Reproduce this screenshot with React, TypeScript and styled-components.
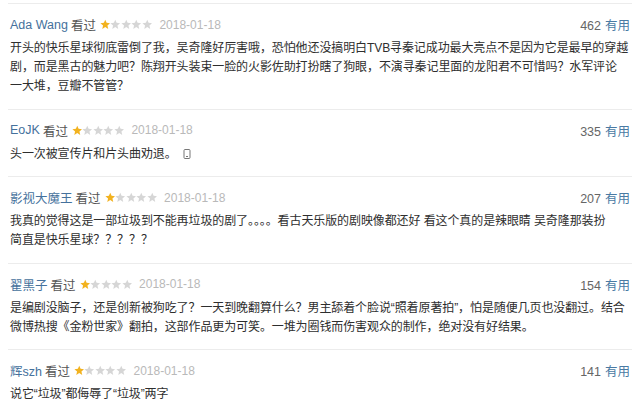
import styled, { createGlobalStyle } from "styled-components";

const GlobalStyle = createGlobalStyle`
  html, body {
    margin: 0;
    padding: 0;
    background: #fff;
  }
  body {
    font-family: "Liberation Sans", "Noto Sans CJK SC", sans-serif;
    color: #333;
  }
`;

const List = styled.div`
  padding: 3px 8px 0;
  width: 640px;
  box-sizing: border-box;
  overflow: hidden;
`;

const Item = styled.div`
  border-top: 1px solid #ececec;
  padding: 10.5px 2px 12.5px;
`;

const Header = styled.div`
  display: flex;
  align-items: center;
  height: 20px;
  font-size: 12.5px;
`;

const Name = styled.span`
  color: #45719c;
`;

const Seen = styled.span`
  color: #555;
  margin-left: 3px;
`;

const Stars = styled.span`
  display: inline-flex;
  margin-left: 4px;
`;

const DateText = styled.span`
  color: #b9b9b9;
  font-size: 12px;
  margin-left: 7px;
`;

const Votes = styled.span`
  margin-left: auto;
  color: #666;
  font-size: 12.5px;
`;

const Useful = styled.span`
  color: #4a7aa3;
  margin-left: 4px;
`;

const Content = styled.p`
  margin: 4.5px 0 0;
  font-size: 12px;
  line-height: 19px;
  white-space: pre;
  letter-spacing: -0.1px;
  color: #2e2e2e;
`;

const Star = ({ on }: { on: boolean }) => (
  <svg width="10.5" height="11" viewBox="0 0 24 24">
    <polygon
      points="12,1 15.1,8.2 23,8.9 17,14.1 18.8,22 12,17.9 5.2,22 7,14.1 1,8.9 8.9,8.2"
      fill={on ? "#f2b21f" : "#d6d6d6"}
    />
  </svg>
);

const PhoneIcon = () => (
  <svg width="8" height="10" viewBox="0 0 8 10" style={{ marginLeft: 6, verticalAlign: -1 }}>
    <rect x="1" y="0.5" width="6" height="9" rx="1" fill="none" stroke="#777" strokeWidth="1" />
    <line x1="3" y1="7.5" x2="5" y2="7.5" stroke="#777" strokeWidth="1" />
  </svg>
);

type Comment = {
  name: string;
  votes: number;
  text: string;
  mobile?: boolean;
};

const comments: Comment[] = [
  {
    name: "Ada Wang",
    votes: 462,
    text:
      "开头的快乐星球彻底雷倒了我，吴奇隆好厉害哦，恐怕他还没搞明白TVB寻秦记成功最大亮点不是因为它是最早的穿越\n剧，而是黑古的魅力吧？陈翔开头装束一脸的火影佐助打扮瞎了狗眼，不演寻秦记里面的龙阳君不可惜吗？水军评论\n一大堆，豆瓣不管管？",
  },
  {
    name: "EoJK",
    votes: 335,
    text: "头一次被宣传片和片头曲劝退。",
    mobile: true,
  },
  {
    name: "影视大魔王",
    votes: 207,
    text:
      "我真的觉得这是一部垃圾到不能再垃圾的剧了。。。。看古天乐版的剧映像都还好 看这个真的是辣眼睛 吴奇隆那装扮\n简直是快乐星球？？？？？",
  },
  {
    name: "翟黑子",
    votes: 154,
    text:
      "是编剧没脑子，还是创新被狗吃了？一天到晚翻算什么？男主舔着个脸说“照着原著拍”，怕是随便几页也没翻过。结合\n微博热搜《金粉世家》翻拍，这部作品更为可笑。一堆为圈钱而伤害观众的制作，绝对没有好结果。",
  },
  {
    name: "辉szh",
    votes: 141,
    text: "说它“垃圾”都侮辱了“垃圾”两字",
  },
];

export default function App() {
  return (
    <>
      <GlobalStyle />
      <List>
        {comments.map((c) => (
          <Item key={c.name}>
            <Header>
              <Name>{c.name}</Name>
              <Seen>看过</Seen>
              <Stars>
                {[0, 1, 2, 3, 4].map((i) => (
                  <Star key={i} on={i === 0} />
                ))}
              </Stars>
              <DateText>2018-01-18</DateText>
              <Votes>
                {c.votes}
                <Useful>有用</Useful>
              </Votes>
            </Header>
            <Content>
              {c.text}
              {c.mobile && <PhoneIcon />}
            </Content>
          </Item>
        ))}
      </List>
    </>
  );
}
